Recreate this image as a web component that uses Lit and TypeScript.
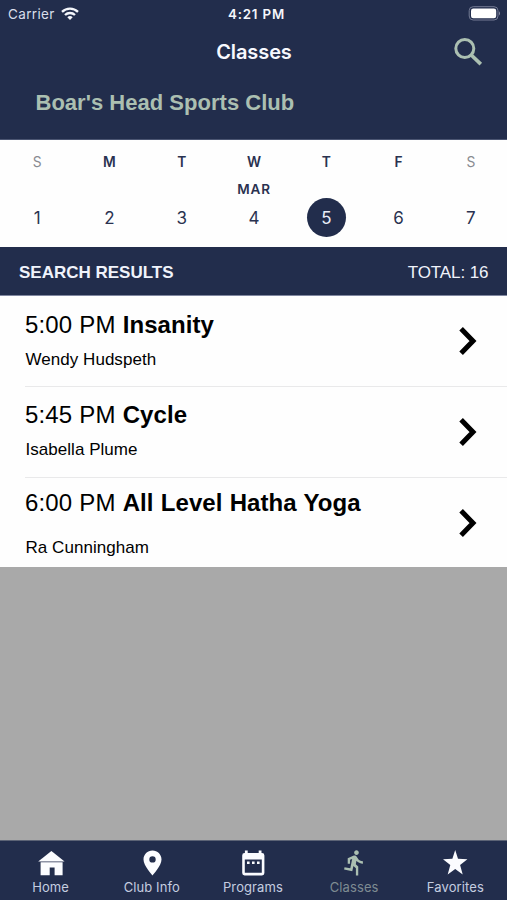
import { LitElement, html, css, svg } from "lit";
import { customElement } from "lit/decorators.js";
import { classMap } from "lit/directives/class-map.js";

const days = [
  { d: "S", n: 1 },
  { d: "M", n: 2 },
  { d: "T", n: 3 },
  { d: "W", n: 4, month: "MAR" },
  { d: "T", n: 5, selected: true },
  { d: "F", n: 6 },
  { d: "S", n: 7 },
];

const classes = [
  { time: "5:00 PM", name: "Insanity", coach: "Wendy Hudspeth" },
  { time: "5:45 PM", name: "Cycle", coach: "Isabella Plume" },
  { time: "6:00 PM", name: "All Level Hatha Yoga", coach: "Ra Cunningham", tall: true },
];

// Tab icons share a 30x30 canvas.
const tabs = [
  {
    label: "Home",
    icon: svg`<path d="M15.400 3 28.600 13.600H2.200z"/><path d="M4.600 14.300H26.600V27.200H18.600V19.400H13.700V27.200H4.600z"/>`,
  },
  {
    label: "Club Info",
    icon: svg`<path fill-rule="evenodd" d="M15.500 2.600c-5 0-9 3.900-9 8.900C6.500 17.800 15.500 27.400 15.500 27.400s9-9.600 9-15.900c0-5-4-8.900-9-8.900zm0 5.600a3.200 3.200 0 1 1 0 6.400a3.200 3.200 0 0 1 0-6.400z"/>`,
  },
  {
    label: "Programs",
    icon: svg`<path fill-rule="evenodd" d="M6.900 2.500h2.800V5.100h11V2.500h2.800V5.100h.5a2.400 2.400 0 0 1 2.400 2.400V25A2.400 2.400 0 0 1 24 27.400H6.600a2.400 2.400 0 0 1-2.400-2.400V7.500A2.400 2.400 0 0 1 6.600 5.100h.3zM6.800 11.400v13.400h17V11.400z"/><path d="M9 13.500h2.600v2.600H9zM14 13.500h2.600v2.600h-2.600zM19 13.500h2.600v2.600h-2.600z"/>`,
  },
  {
    label: "Classes",
    active: true,
    icon: svg`<path transform="translate(1.700 .5) scale(1.170)" d="M13.490 5.480c1.100 0 2-.9 2-2s-.9-2-2-2-2 .9-2 2 .9 2 2 2zm-3.600 13.900l1-4.400 2.100 2v6h2v-7.500l-2.100-2 .6-3c1.300 1.500 3.300 2.500 5.500 2.500v-2c-1.900 0-3.500-1-4.300-2.400l-1-1.600c-.4-.6-1-1-1.700-1-.3 0-.5.1-.8.1l-5.200 2.200v4.700h2v-3.400l1.800-.7-1.600 8.100-4.900-1-.4 2 7 1.400z"/>`,
  },
  {
    label: "Favorites",
    icon: svg`<path d="M15.200 2 18 10.800 27.400 11.200 20.100 17 22.700 26.400 15.200 21.100 7.700 26.400 10.300 17 3 11.200 12.400 10.800z"/>`,
  },
];

@customElement("app-root")
export class AppRoot extends LitElement {
  static styles = css`
    :host {
      display: flex;
      flex-direction: column;
      height: 900px;
      background: #a9a9a9;
      color: #000;
      font-family: "Liberation Sans", Arial, sans-serif;
      white-space: nowrap;
      overflow: hidden;
    }
    * { box-sizing: border-box; }
    svg { display: block; }
    .top { height: 140px; flex: none; background: #222d4c; border-bottom: 1px solid #4b5572; }
    .status {
      height: 28px;
      display: grid;
      grid-template-columns: 1fr auto 1fr;
      align-items: center;
      padding: 0 6px 0 8px;
      font: 13px/28px Inter, sans-serif;
      color: #d9deea;
    }
    .carrier { display: flex; align-items: center; gap: 7px; font-size: 13.500px; letter-spacing: 0.350px; }
    .carrier svg { margin: -2px 0 0 -1px; }
    .clock { font-weight: 600; font-size: 13.300px; letter-spacing: 0.850px; color: #f4f6fb; padding-left: 4px; }
    .battery { justify-self: end; margin-top: -2px; }
    .nav {
      height: 48px;
      display: grid;
      grid-template-columns: 1fr auto 1fr;
      align-items: center;
      padding: 0 24px 0 25px;
    }
    .title { font: 600 20px/48px Inter, sans-serif; color: #f7f8fe; grid-column: 2; letter-spacing: -0.100px; }
    .search { justify-self: end; }
    .club { padding-left: 35.500px; font: bold 22px/54px "Liberation Sans", sans-serif; letter-spacing: 0.020px; color: #abbfb1; }
    .week {
      height: 107px;
      flex: none;
      display: grid;
      grid-template-columns: repeat(7, 72.3px);
      background: #fefefe;
      color: #2a3250;
      font-family: Inter, sans-serif;
    }
    .day { display: grid; grid-template-rows: 30px 17px 39px; padding-top: 11px; justify-items: center; padding-left: 2px; }
    .letter { font-size: 13.800px; font-weight: 600; line-height: 22px; }
    .weekend { font-weight: 400; color: #898b91; }
    .month { font-size: 13.500px; font-weight: 600; line-height: 17px; letter-spacing: 0.800px; }
    .num { width: 39px; height: 39px; border-radius: 50%; text-align: center; font-size: 17px; line-height: 41px; }
    .selected { background: #222d4c; color: #e9edf8; }
    .results {
      height: 49px;
      flex: none;
      display: flex;
      align-items: center;
      justify-content: space-between;
      padding: 3px 18.500px 0 19px;
      background: #222d4c;
      border-bottom: 1px solid #8087a0;
      color: #f0f3fb;
      font-size: 17px;
    }
    .heading { font-weight: bold; }
    .total { letter-spacing: -0.080px; }
    .list { flex: none; background: #fefefe; display: grid; grid-template-rows: 90px 91px 90px; }
    .row {
      margin-left: 25px;
      padding-right: 30px;
      display: flex;
      align-items: center;
      justify-content: space-between;
    }
    .row + .row { border-top: 1px solid #e9e9ea; }
    .info { align-self: stretch; padding-top: 14px; }
    .row + .row .info { padding-top: 13px; }
    .name { font-size: 24px; line-height: 30px; letter-spacing: 0.100px; word-spacing: 0.400px; }
    .name b { letter-spacing: 0.080px; }
    .coach { font-size: 17px; line-height: 20px; padding: 10px 0 0 0.500px; letter-spacing: 0.040px; }
    .row.tall .info { padding-top: 10px; }
    .tall .coach { padding-top: 20px; }
    .tabs {
      margin-top: auto;
      height: 60px;
      flex: none;
      display: grid;
      grid-template-columns: repeat(5, 101.2px);
      background: #222d4c;
      border-top: 1px solid #5c6375;
      font: 13px/16px Inter, sans-serif;
      color: #c5cde0;
    }
    .tab { display: flex; flex-direction: column; align-items: center; padding-top: 7px; letter-spacing: 0.100px; }
    .tab span { padding-top: 1px; }
    .glyph { fill: #fbfcff; }
    .active { color: #7e8b92; }
    .active .glyph { fill: #abbfb1; }
  `;

  render() {
    return html`
      <header class="top">
        <div class="status">
          <div class="carrier">
            <span>Carrier</span>
            <svg width="18" height="13" viewBox="0 0 18 13" fill="none" stroke="#f4f6fb" stroke-width="2.300">
              <path d="M1 4.800a11.500 11.500 0 0 1 16 0" />
              <path d="M4 8a7.200 7.200 0 0 1 10 0" />
              <path d="M6.300 10.200a4 4 0 0 1 5.400 0L9 12.900z" fill="#f4f6fb" stroke="none" />
            </svg>
          </div>
          <span class="clock">4:21 PM</span>
          <svg class="battery" width="33" height="15" viewBox="0 0 33 15">
            <rect x="1.200" y=".7" width="28.800" height="13.300" rx="4" fill="none" stroke="#747b94" />
            <rect x="3" y="2.500" width="25.200" height="9.700" rx="2.300" fill="#fff" />
            <path d="M31 5.200q2 2.200 0 4.400z" fill="#8a90a6" />
          </svg>
        </div>
        <div class="nav">
          <span class="title">Classes</span>
          <svg class="search" width="30" height="30" viewBox="0 0 30 30" fill="none" stroke="#abbfb1">
            <circle cx="11.800" cy="11.500" r="9" stroke-width="3" />
            <path d="M18.200 18 27.800 27.200" stroke-width="3.700" />
          </svg>
        </div>
        <div class="club">Boar's Head Sports Club</div>
      </header>
      <section class="week">
        ${days.map(
          (x) => html`<div class="day">
            <span class=${classMap({ letter: true, weekend: x.d === "S" })}>${x.d}</span>
            <span class="month">${x.month ?? ""}</span>
            <span class=${classMap({ num: true, selected: !!x.selected })}>${x.n}</span>
          </div>`
        )}
      </section>
      <section class="results"><span class="heading">SEARCH RESULTS</span><span class="total">TOTAL: 16</span></section>
      <section class="list">
        ${classes.map(
          (c) => html`<div class=${classMap({ row: true, tall: !!c.tall })}>
            <div class="info">
              <div class="name">${c.time} <b>${c.name}</b></div>
              <div class="coach">${c.coach}</div>
            </div>
            <svg width="18" height="30" viewBox="0 0 18 30" fill="none" stroke="#000" stroke-width="5">
              <path d="M2.100 2.700 14 15 2.100 27.300" />
            </svg>
          </div>`
        )}
      </section>
      <nav class="tabs">
        ${tabs.map(
          (t) => html`<div class=${classMap({ tab: true, active: !!t.active })}>
            <svg class="glyph" width="30" height="30" viewBox="0 0 30 30">${t.icon}</svg>
            <span>${t.label}</span>
          </div>`
        )}
      </nav>
    `;
  }
}
